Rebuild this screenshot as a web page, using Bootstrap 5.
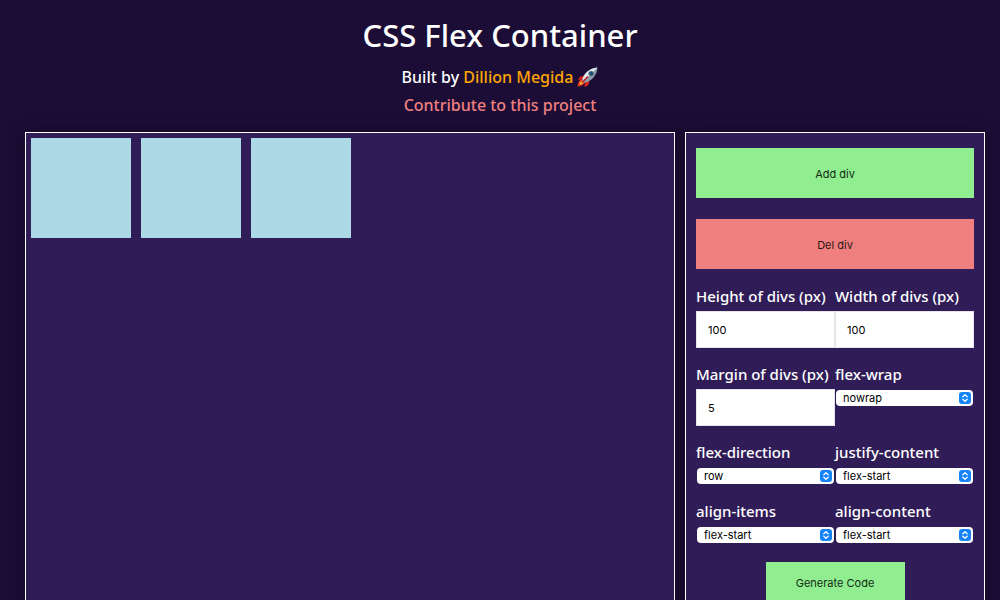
<!DOCTYPE html>
<html lang="en">
<head>
<meta charset="utf-8">
<meta name="viewport" content="width=device-width, initial-scale=1">
<title>CSS Flex Container</title>
<link href="https://cdn.jsdelivr.net/npm/bootstrap@5.3.0/dist/css/bootstrap.min.css" rel="stylesheet">
<style>
body { background: #1b0d36; color: #fff; font-family: "Noto Sans", sans-serif; font-weight: 500; overflow-x: hidden; }
header { padding-top: 14px; }
h1 { font-size: 31px; line-height: 42px; font-weight: 500; margin: 0 0 7px; }
.byline { font-size: 16px; line-height: 28px; }
.author { color: orange; }
.contribute { color: #f08080; }
.rocket { width: 21px; height: 21px; }
.workspace { display: grid; grid-template-columns: minmax(0, 1fr) 300px; gap: 10px; padding: 13px 15px 20px 25px; }
.panel { background: #301d57; border: 1px solid #fff; box-shadow: 0 0 16px rgba(0, 0, 0, .3); }
.stage { padding: 5px; gap: 10px; }
.box { width: 100px; height: 100px; background: #add8e6; }
.controls { padding: 15px 10px 20px; }
.action { border: 0; height: 50px; padding: 2px 0 0; font: 400 11px/16px Inter, sans-serif; color: #142a14; }
.action-add { background: #90ee90; }
.action-del { background: #f08080; color: #2d1414; margin-top: 21px; }
.action-code { height: 40px; margin-top: 18px; }
.fields { margin-top: 16px; row-gap: 15px; }
.fields label { display: block; font-size: 15px; line-height: 22px; margin-bottom: 4px; white-space: nowrap; }
.fields input { display: block; width: 100%; height: 37px; padding: 0 11px; border: 1px solid #e4e4ea; border-radius: 0; background: #fff; color: #000; font: 400 11px/16px Inter, sans-serif; }
.picker { position: relative; margin: 5px 1px 1px; }
.picker select { display: block; appearance: none; width: 100%; height: 16px; padding: 0 22px 0 7px; border: 0; border-radius: 4px; background: #fff; color: #000; font: 400 11px/16px Inter, sans-serif; }
.picker svg { position: absolute; top: 2px; right: 2px; width: 12px; height: 12px; pointer-events: none; }
</style>
</head>
<body>
<svg class="d-none" xmlns="http://www.w3.org/2000/svg">
  <symbol id="updown" viewBox="0 0 12 12">
    <rect width="12" height="12" rx="3" fill="#1683f7"/>
    <path d="M3.8 4.8 6 2.7l2.2 2.1M3.8 7.2 6 9.3l2.2-2.1" fill="none" stroke="#fff" stroke-width="1.2" stroke-linecap="round" stroke-linejoin="round"/>
  </symbol>
</svg>
<header class="text-center">
  <h1>CSS Flex Container</h1>
  <div class="byline d-flex justify-content-center align-items-center gap-1">
    <span>Built by <a class="author text-decoration-none" href="#">Dillion Megida</a></span>
    <svg class="rocket" viewBox="0 0 20 20" role="img" aria-label="rocket">
      <path d="M7 8 2.500 9.500 1 12.500l5-1zM12 13l-1.500 4.500L7 19l1-5z" fill="#d9251d"/>
      <path d="M5 12c-3 0-4 3-4.500 6.500C4 18 7 17 7.500 14.500z" fill="#ee3b1d"/>
      <path d="M5.500 13c-2 .5-2.800 2-3.200 3.800 1.800-.3 3.800-1.200 4.200-2.500z" fill="#ffd43a"/>
      <path d="M5 12.500C6.500 6 12 1 19.500.500 19 8 14 13.500 7.500 15z" fill="#8e9dac"/>
      <path d="M5 12.500C6.500 6 12 1 19.500.500L6.500 13.500z" fill="#dfe8ed"/>
      <circle cx="13.500" cy="6.300" r="2.600" fill="#536878"/>
      <circle cx="13.500" cy="6.300" r="1.600" fill="#174b78"/>
      <path d="m10 9.500-5 5" stroke="#b3292b" stroke-width="1.600" stroke-linecap="round"/>
    </svg>
  </div>
  <div class="byline"><a class="contribute text-decoration-none" href="#">Contribute to this project</a></div>
</header>
<main class="workspace">
  <section class="panel stage d-flex flex-nowrap justify-content-start align-items-start" aria-label="Preview">
    <div class="box"></div>
    <div class="box"></div>
    <div class="box"></div>
  </section>
  <form class="panel controls" onsubmit="return false">
    <button type="button" class="action action-add d-block w-100">Add div</button>
    <button type="button" class="action action-del d-block w-100">Del div</button>
    <div class="fields row gx-0">
      <div class="col-6"><label for="h">Height of divs (px)</label><input id="h" type="text" inputmode="numeric" value="100"></div>
      <div class="col-6"><label for="w">Width of divs (px)</label><input id="w" type="text" inputmode="numeric" value="100"></div>
      <div class="col-6"><label for="m">Margin of divs (px)</label><input id="m" type="text" inputmode="numeric" value="5"></div>
      <div class="col-6"><label for="wrap">flex-wrap</label><div class="picker"><select id="wrap"><option>nowrap</option><option>wrap</option></select><svg aria-hidden="true"><use href="#updown"/></svg></div></div>
      <div class="col-6"><label for="dir">flex-direction</label><div class="picker"><select id="dir"><option>row</option><option>column</option></select><svg aria-hidden="true"><use href="#updown"/></svg></div></div>
      <div class="col-6"><label for="jc">justify-content</label><div class="picker"><select id="jc"><option>flex-start</option><option>center</option></select><svg aria-hidden="true"><use href="#updown"/></svg></div></div>
      <div class="col-6"><label for="ai">align-items</label><div class="picker"><select id="ai"><option>flex-start</option><option>center</option></select><svg aria-hidden="true"><use href="#updown"/></svg></div></div>
      <div class="col-6"><label for="ac">align-content</label><div class="picker"><select id="ac"><option>flex-start</option><option>center</option></select><svg aria-hidden="true"><use href="#updown"/></svg></div></div>
    </div>
    <button type="button" class="action action-add action-code d-block w-50 mx-auto">Generate Code</button>
  </form>
</main>
<script src="https://cdn.jsdelivr.net/npm/bootstrap@5.3.0/dist/js/bootstrap.bundle.min.js"></script>
</body>
</html>
